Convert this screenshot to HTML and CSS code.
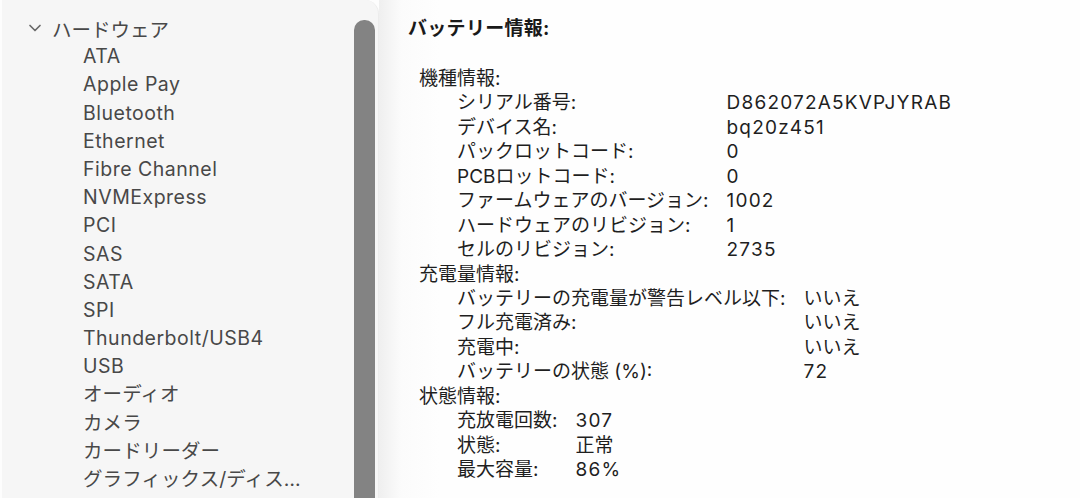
FILE: index.html
```html
<!DOCTYPE html>
<html lang="ja">
<head>
<meta charset="utf-8">
<link rel="stylesheet" href="styles.css">
</head>
<body>
<div class="window">
  <aside class="sidebar">
    <div class="tree">
      <div class="group-head">
        <svg class="chev" viewBox="0 0 14 10" width="14" height="10"><path d="M2 2.5 L7 7.5 L12 2.5" fill="none" stroke="#6a6a6a" stroke-width="1.7" stroke-linecap="round" stroke-linejoin="round"/></svg>
        <span class="ja">ハードウェア</span>
      </div>
      <ul class="items">
        <li>ATA</li>
        <li>Apple Pay</li>
        <li>Bluetooth</li>
        <li>Ethernet</li>
        <li>Fibre Channel</li>
        <li>NVMExpress</li>
        <li>PCI</li>
        <li>SAS</li>
        <li>SATA</li>
        <li>SPI</li>
        <li>Thunderbolt/USB4</li>
        <li>USB</li>
        <li class="ja">オーディオ</li>
        <li class="ja">カメラ</li>
        <li class="ja">カードリーダー</li>
        <li class="ja">グラフィックス/ディス…</li>
      </ul>
    </div>
    <div class="scroll-thumb"></div>
  </aside>
  <main class="content">
    <h1 class="title">バッテリー情報:</h1>
    <section class="block">
      <div class="sec-head">機種情報:</div>
      <div class="kv">
        <span>シリアル番号:</span><span class="num">D862072A5KVPJYRAB</span>
        <span>デバイス名:</span><span class="num">bq20z451</span>
        <span>パックロットコード:</span><span class="num">0</span>
        <span>PCBロットコード:</span><span class="num">0</span>
        <span>ファームウェアのバージョン:</span><span class="num">1002</span>
        <span>ハードウェアのリビジョン:</span><span class="num">1</span>
        <span>セルのリビジョン:</span><span class="num">2735</span>
      </div>
      <div class="sec-head">充電量情報:</div>
      <div class="kv">
        <span>バッテリーの充電量が警告レベル以下:</span><span>いいえ</span>
        <span>フル充電済み:</span><span>いいえ</span>
        <span>充電中:</span><span>いいえ</span>
        <span>バッテリーの状態 (%):</span><span class="num">72</span>
      </div>
      <div class="sec-head">状態情報:</div>
      <div class="kv">
        <span>充放電回数:</span><span class="num">307</span>
        <span>状態:</span><span>正常</span>
        <span>最大容量:</span><span class="num">86%</span>
      </div>
    </section>
  </main>
</div>
</body>
</html>
```

FILE: styles.css
```css
html, body {
  margin: 0;
  padding: 0;
  width: 1080px;
  height: 498px;
  overflow: hidden;
  background: #fdfdfd;
  font-family: "Inter", "Noto Sans CJK JP", sans-serif;
}

.window {
  display: flex;
  height: 498px;
}

.sidebar {
  position: relative;
  width: 376px;
  margin-left: 2px;
  background: #f6f6f6;
  border-top-right-radius: 14px;
  border-right: 1px solid #ececec;
  flex-shrink: 0;
}

.tree {
  padding-top: 14px;
  color: #484848;
  font-size: 19.5px;
}

.group-head {
  display: flex;
  align-items: center;
  height: 28.2px;
  padding-left: 26px;
  gap: 10px;
}

.chev {
  display: block;
}

.items {
  list-style: none;
  margin: 0;
  padding: 0 0 0 81px;
}

.items li {
  height: 28.2px;
  line-height: 28.2px;
  white-space: nowrap;
  letter-spacing: 0.5px;
}

.items li.ja {
  letter-spacing: 0.1px;
}

.scroll-thumb {
  position: absolute;
  left: 352px;
  top: 20px;
  width: 21px;
  bottom: 0;
  background: #838383;
  border-radius: 10px 10px 0 0;
}

.content {
  flex: 1;
  padding: 14px 0 0 29px;
  background: linear-gradient(to right, #efefef 0px, #fbfbfb 22px, #fefefe 60px);
  color: #1f1f1f;
  font-size: 19px;
}

.title {
  margin: 0;
  font-size: 19px;
  font-weight: 700;
  line-height: 30px;
  letter-spacing: 0.3px;
  color: #1a1a1a;
}

.block {
  margin-top: 23px;
  padding-left: 11px;
  line-height: 24.45px;
}

.sec-head {
  height: 24.45px;
}

.kv {
  display: grid;
  grid-template-columns: max-content max-content;
  column-gap: 18px;
  padding-left: 38px;
}

.kv span {
  height: 24.45px;
  white-space: nowrap;
}

.kv .num {
  letter-spacing: 1.2px;
}
```
